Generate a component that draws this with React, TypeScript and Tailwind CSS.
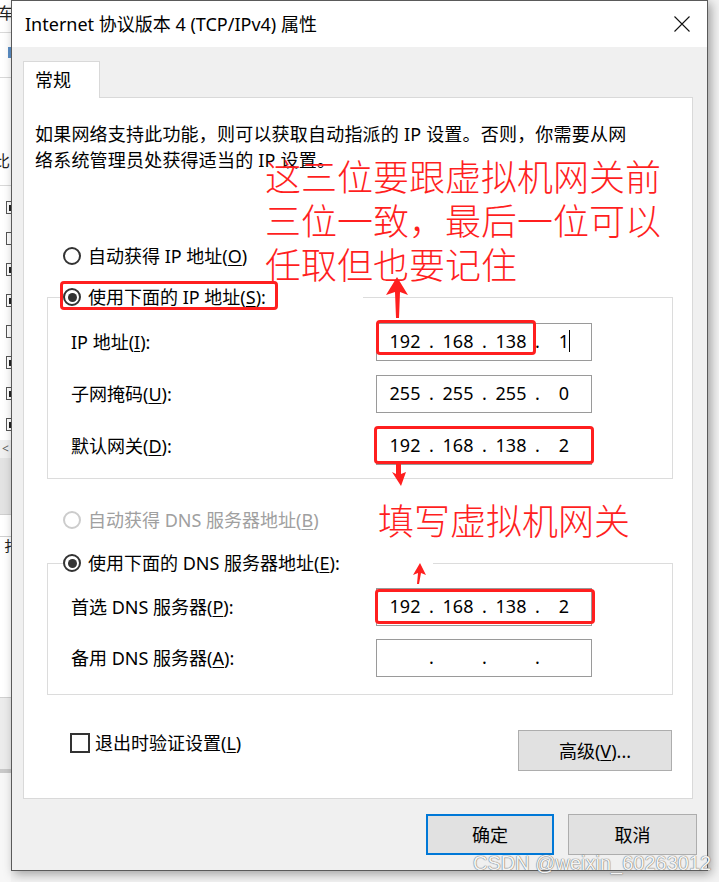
import React from "react";

function Radio({ checked, disabled }: { checked?: boolean; disabled?: boolean }) {
  return (
    <span
      className={
        disabled
          ? "flex h-[18px] w-[18px] shrink-0 items-center justify-center rounded-full border-2 border-[#cccccc] bg-white"
          : "flex h-[18px] w-[18px] shrink-0 items-center justify-center rounded-full border-2 border-[#333333] bg-white"
      }
    >
      {checked && <span className="h-[9px] w-[9px] rounded-full bg-[#333333]" />}
    </span>
  );
}

function IpBox({ parts, cursor }: { parts: string[]; cursor?: boolean }) {
  return (
    <div className="flex h-[38px] w-[216px] items-center border border-[#9a9a9a] bg-white pb-[2px] pl-[4px] leading-[24px]">
      {parts.map((p, i) => (
        <React.Fragment key={i}>
          {i > 0 && <span className="flex w-[5px] justify-center">.</span>}
          <span className="relative flex h-[24px] w-[48px] justify-center">
            {p}
            {cursor && i === 3 && (
              <span className="absolute left-[29px] top-[1px] h-[22px] w-px bg-black" />
            )}
          </span>
        </React.Fragment>
      ))}
    </div>
  );
}

function FieldRow({
  label,
  className,
  children,
}: {
  label: React.ReactNode;
  className: string;
  children: React.ReactNode;
}) {
  return (
    <div className={className}>
      <span className="w-[305px] shrink-0 leading-[24px]">{label}</span>
      {children}
    </div>
  );
}

function BackgroundStrip() {
  const boxes = [true, false, true, true, false, true, true, true];
  return (
    <div className="flex h-full w-[11px] shrink-0 flex-col overflow-hidden bg-white text-[16px] leading-[18px] text-[#222]">
      <div className="h-[33px] shrink-0 border-b border-[#d9d9d9] pt-[4px]">
        <span className="-ml-[2px] block w-[20px]">车</span>
      </div>
      <div className="h-[45px] shrink-0 border-b border-[#d9d9d9] pl-[8px] pt-[14px]">
        <div className="h-[11px] w-[3px] bg-[#5b8fc7]" />
      </div>
      <div className="h-[108px] shrink-0 border-b border-[#d9d9d9] pt-[74px]">
        <span className="-ml-[6px] block w-[20px]">比</span>
      </div>
      <div className="h-[6px] shrink-0" />
      {boxes.map((c, i) => (
        <div key={i} className="flex h-[31px] shrink-0 items-center pl-[6px]">
          <span className="flex h-[13px] w-[13px] shrink-0 items-center border border-[#555] bg-white pl-[2px]">
            {c && <span className="h-[6px] w-[3px] bg-[#222]" />}
          </span>
        </div>
      ))}
      <div className="flex h-[18px] shrink-0 items-center bg-[#f0f0f0] pl-[2px] text-[12px] text-[#606060]">
        &lt;
      </div>
      <div className="h-[57px] shrink-0 border-b border-[#cfcfcf] bg-[#e3e3e3]" />
      <div className="h-[22px] shrink-0 border-b border-[#d0d0d0] bg-white" />
      <div className="h-[160px] shrink-0 bg-white">
        <span className="ml-[4px] block w-[20px] text-[14px]">扌</span>
      </div>
      <div className="h-[72px] shrink-0 border-t border-[#d0d0d0] bg-[#ececec]" />
      <div className="h-[4px] shrink-0 bg-[#c9c9c9]" />
      <div className="flex-1 bg-[#f7f7f7]" />
    </div>
  );
}

function Dialog() {
  return (
    <div className="flex h-[871px] w-[697px] shrink-0 flex-col border border-[#5a5a5a] bg-[#f0f0f0] shadow-[3px_3px_10px_rgba(0,0,0,0.35)]">
      <div className="flex h-[46px] shrink-0 items-center justify-between bg-white pl-[13px] pr-[17px]">
        <span className="leading-[24px]">Internet 协议版本 4 (TCP/IPv4) 属性</span>
        <svg width="16" height="16" viewBox="0 0 16 16">
          <path d="M0.5 0.5L15.5 15.5M15.5 0.5L0.5 15.5" stroke="#111" strokeWidth="1.1" fill="none" />
        </svg>
      </div>
      <div className="flex flex-1 flex-col pl-[11px]">
        <div className="relative z-10 mt-[14px] flex h-[37px] w-[77px] items-center border-x border-t border-[#d9d9d9] bg-white pl-[11px] leading-[24px]">
          常规
        </div>
        <div className="-mt-px w-[670px] border border-[#d9d9d9] bg-white pb-[27px]">
          <div className="mt-[23px] whitespace-nowrap px-[11px] leading-[26px] tracking-[0.2px]">
            如果网络支持此功能，则可以获取自动指派的 IP 设置。否则，你需要从网
            <br />
            络系统管理员处获得适当的 IP 设置。
          </div>

          <div className="ml-[39px] mt-[70px] flex h-[26px] items-center">
            <Radio />
            <span className="ml-[7px] leading-[24px]">
              自动获得 IP 地址(<u className="underline-offset-2">O</u>)
            </span>
          </div>

          <div className="ml-[23px] mt-[28px] w-[626px] border border-[#dcdcdc] pb-[13px]">
            <div className="relative -mt-[14px] ml-[15px] flex h-[26px] w-[300px] items-center bg-white">
              <Radio checked />
              <span className="ml-[7px] leading-[24px]">
                使用下面的 IP 地址(<u className="underline-offset-2">S</u>):
              </span>
              <span className="absolute -left-[3px] -top-[3px] h-[29px] w-[218px] rounded-[4px] border-[3px] border-[#ff1f1f]" />
            </div>
            <FieldRow
              className="mt-[13px] flex h-[38px] items-center pl-[23px]"
              label={<>IP 地址(<u className="underline-offset-2">I</u>):</>}
            >
              <div className="relative">
                <IpBox parts={["192", "168", "138", "1"]} cursor />
                <span className="absolute -top-[3px] left-0 h-[35px] w-[160px] rounded-[4px] border-[3px] border-[#ff1f1f]" />
              </div>
            </FieldRow>
            <FieldRow
              className="mt-[14px] flex h-[38px] items-center pl-[23px]"
              label={<>子网掩码(<u className="underline-offset-2">U</u>):</>}
            >
              <IpBox parts={["255", "255", "255", "0"]} />
            </FieldRow>
            <FieldRow
              className="mt-[14px] flex h-[38px] items-center pl-[23px]"
              label={<>默认网关(<u className="underline-offset-2">D</u>):</>}
            >
              <div className="relative">
                <IpBox parts={["192", "168", "138", "2"]} />
                <span className="absolute -left-[2px] -top-[1px] h-[38px] w-[220px] rounded-[4px] border-[3px] border-[#ff1f1f]" />
              </div>
            </FieldRow>
          </div>

          <div className="ml-[39px] mt-[28px] flex h-[26px] items-center">
            <Radio disabled />
            <span className="ml-[7px] leading-[24px] text-[#a0a0a0]">
              自动获得 DNS 服务器地址(<u className="underline-offset-2">B</u>)
            </span>
          </div>

          <div className="ml-[23px] mt-[30px] w-[626px] border border-[#dcdcdc] pb-[17px]">
            <div className="-mt-[14px] ml-[15px] flex h-[26px] w-[370px] items-center bg-white">
              <Radio checked />
              <span className="ml-[7px] leading-[24px]">
                使用下面的 DNS 服务器地址(<u className="underline-offset-2">E</u>):
              </span>
            </div>
            <FieldRow
              className="mt-[12px] flex h-[38px] items-center pl-[23px]"
              label={<>首选 DNS 服务器(<u className="underline-offset-2">P</u>):</>}
            >
              <div className="relative">
                <IpBox parts={["192", "168", "138", "2"]} />
                <span className="absolute -left-[1px] top-[1px] h-[35px] w-[220px] rounded-[4px] border-[3px] border-[#ff1f1f]" />
              </div>
            </FieldRow>
            <FieldRow
              className="mt-[13px] flex h-[38px] items-center pl-[23px]"
              label={<>备用 DNS 服务器(<u className="underline-offset-2">A</u>):</>}
            >
              <IpBox parts={["", "", "", ""]} />
            </FieldRow>
          </div>

          <div className="mt-[35px] flex items-start justify-between pl-[46px] pr-[20px]">
            <div className="flex h-[26px] items-center">
              <span className="h-[20px] w-[20px] border-2 border-[#333333] bg-white" />
              <span className="ml-[5px] leading-[24px]">
                退出时验证设置(<u className="underline-offset-2">L</u>)
              </span>
            </div>
            <div className="flex h-[41px] w-[154px] items-center justify-center border border-[#adadad] bg-[#e1e1e1] leading-[24px]">
              高级(<u className="underline-offset-2">V</u>)...
            </div>
          </div>
        </div>

        <div className="mt-[15px] flex justify-end gap-[14px] pr-[10px]">
          <div className="flex h-[41px] w-[128px] items-center justify-center border-2 border-[#0078d7] bg-[#e1e1e1] leading-[24px]">
            确定
          </div>
          <div className="flex h-[41px] w-[129px] items-center justify-center border border-[#adadad] bg-[#e1e1e1] leading-[24px]">
            取消
          </div>
        </div>
      </div>
    </div>
  );
}

function Annotations() {
  return (
    <>
      <div className="absolute left-[265px] top-[153px] whitespace-nowrap font-['Noto_Sans_CJK_SC',sans-serif] text-[36px] font-light leading-[44px] text-[#ff1f1f]">
        这三位要跟虚拟机网关前
        <br />
        三位一致，最后一位可以
        <br />
        任取但也要记住
      </div>
      <div className="absolute left-[378px] top-[497px] whitespace-nowrap font-['Noto_Sans_CJK_SC',sans-serif] text-[36px] font-light leading-[44px] text-[#ff1f1f]">
        填写虚拟机网关
      </div>
      <svg className="pointer-events-none absolute left-0 top-0" width="719" height="882" viewBox="0 0 719 882">
        <polygon points="397,277 408,295 400,292 399,318 396,318 395,292 386,295" fill="#ff1f1f" />
        <polygon points="396,463 401,463 401,474 406,472 401,486 392,472 396,474" fill="#ff1f1f" />
        <polygon points="420,563 426,575 421,573 419,584 417,584 418,573 413,575" fill="#ff1f1f" />
      </svg>
    </>
  );
}

export default function App() {
  return (
    <div className="relative flex h-[882px] w-[719px] overflow-hidden bg-[#f3f3f3] font-['Noto_Sans','Noto_Sans_CJK_SC',sans-serif] text-[18px] text-black">
      <BackgroundStrip />
      <Dialog />
      <Annotations />
      <div className="absolute left-[473px] top-[853px] whitespace-nowrap font-['Liberation_Sans',Arial,sans-serif] text-[20px] leading-[20px] text-[#f4f4f4] [text-shadow:0_0_1px_#666,0_0_1px_#666]">
        CSDN @weixin_60263012
      </div>
    </div>
  );
}
